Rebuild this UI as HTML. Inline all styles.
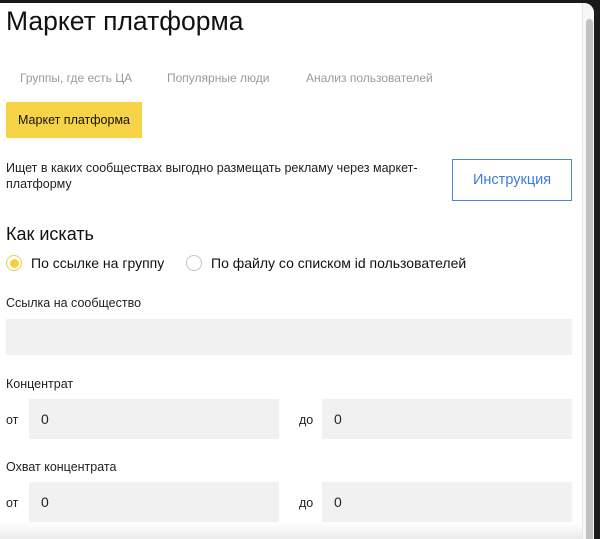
<!DOCTYPE html>
<html><head><meta charset="utf-8"><style>
*{margin:0;padding:0;box-sizing:border-box}
html,body{width:600px;height:539px;overflow:hidden;background:#1a1a1a}
body{font-family:"Liberation Sans",sans-serif;color:#111;position:relative}
.win{position:absolute;left:0;top:3px;width:594px;height:536px;background:#fff;border-top-right-radius:10px;overflow:hidden}
.a{position:absolute;white-space:nowrap}
.inp{position:absolute;background:#f1f1f1}
.lab{font-size:12.5px;color:#222}
.tab{font-size:12px;color:#9a9a9a;top:68px}
.sb{position:absolute;left:582px;top:0;width:12px;height:536px;background:#f7f7f7;border-left:1px solid #e6e6e6}
.th{position:absolute;left:3px;top:16px;width:7px;height:540px;background:#c1c1c1;border-radius:4px}
.num{font-size:14px;color:#222}
</style></head><body>
<div class="win">
<div class="a" style="left:6px;top:3px;font-size:26.5px;color:#111">Маркет платформа</div>
<div class="a tab" style="left:20px">Группы, где есть ЦА</div>
<div class="a tab" style="left:167px">Популярные люди</div>
<div class="a tab" style="left:306px">Анализ пользователей</div>
<div class="a" style="left:6px;top:99px;width:136px;height:36px;background:#f7d447"></div>
<div class="a" style="left:18px;top:110px;font-size:12.5px;color:#111">Маркет платформа</div>
<div class="a lab" style="left:6px;top:157px;line-height:16px;font-size:12.5px">Ищет в каких сообществах выгодно размещать рекламу через маркет-<br>платформу</div>
<div class="a" style="left:452px;top:156px;width:120px;height:42px;border:1.5px solid #4a86e8"></div>
<div class="a" style="left:473px;top:169px;font-size:14.5px;color:#3d7be0">Инструкция</div>
<div class="a" style="left:6px;top:221px;font-size:18px;color:#111">Как искать</div>
<div class="a" style="left:6px;top:252px;width:16px;height:16px;border-radius:50%;border:1.5px solid #f0c94a;background:#fff"></div>
<div class="a" style="left:9.5px;top:255.5px;width:9px;height:9px;border-radius:50%;background:#f7cf3c"></div>
<div class="a" style="left:31px;top:252px;font-size:14px">По ссылке на группу</div>
<div class="a" style="left:186px;top:252px;width:16px;height:16px;border-radius:50%;border:1.5px solid #c4c4c4"></div>
<div class="a" style="left:211px;top:252px;font-size:14px">По файлу со списком id пользователей</div>
<div class="a lab" style="left:6px;top:293px">Ссылка на сообщество</div>
<div class="inp" style="left:6px;top:316px;width:566px;height:36px"></div>
<div class="a lab" style="left:6px;top:374px">Концентрат</div>
<div class="a lab" style="left:6px;top:410px">от</div>
<div class="inp" style="left:29px;top:396px;width:250px;height:40px"></div>
<div class="a num" style="left:41px;top:408px">0</div>
<div class="a lab" style="left:299px;top:410px">до</div>
<div class="inp" style="left:322px;top:396px;width:250px;height:40px"></div>
<div class="a num" style="left:334px;top:408px">0</div>
<div class="a lab" style="left:6px;top:457px">Охват концентрата</div>
<div class="a lab" style="left:6px;top:493px">от</div>
<div class="inp" style="left:29px;top:479px;width:250px;height:40px"></div>
<div class="a num" style="left:41px;top:491px">0</div>
<div class="a lab" style="left:299px;top:493px">до</div>
<div class="inp" style="left:322px;top:479px;width:250px;height:40px"></div>
<div class="a num" style="left:334px;top:491px">0</div>
<div class="a" style="left:0;top:520px;width:582px;height:16px;background:linear-gradient(rgba(255,255,255,0),rgba(235,235,235,1))"></div>
<div class="sb"><div class="th"></div></div>
</div>
</body></html>
